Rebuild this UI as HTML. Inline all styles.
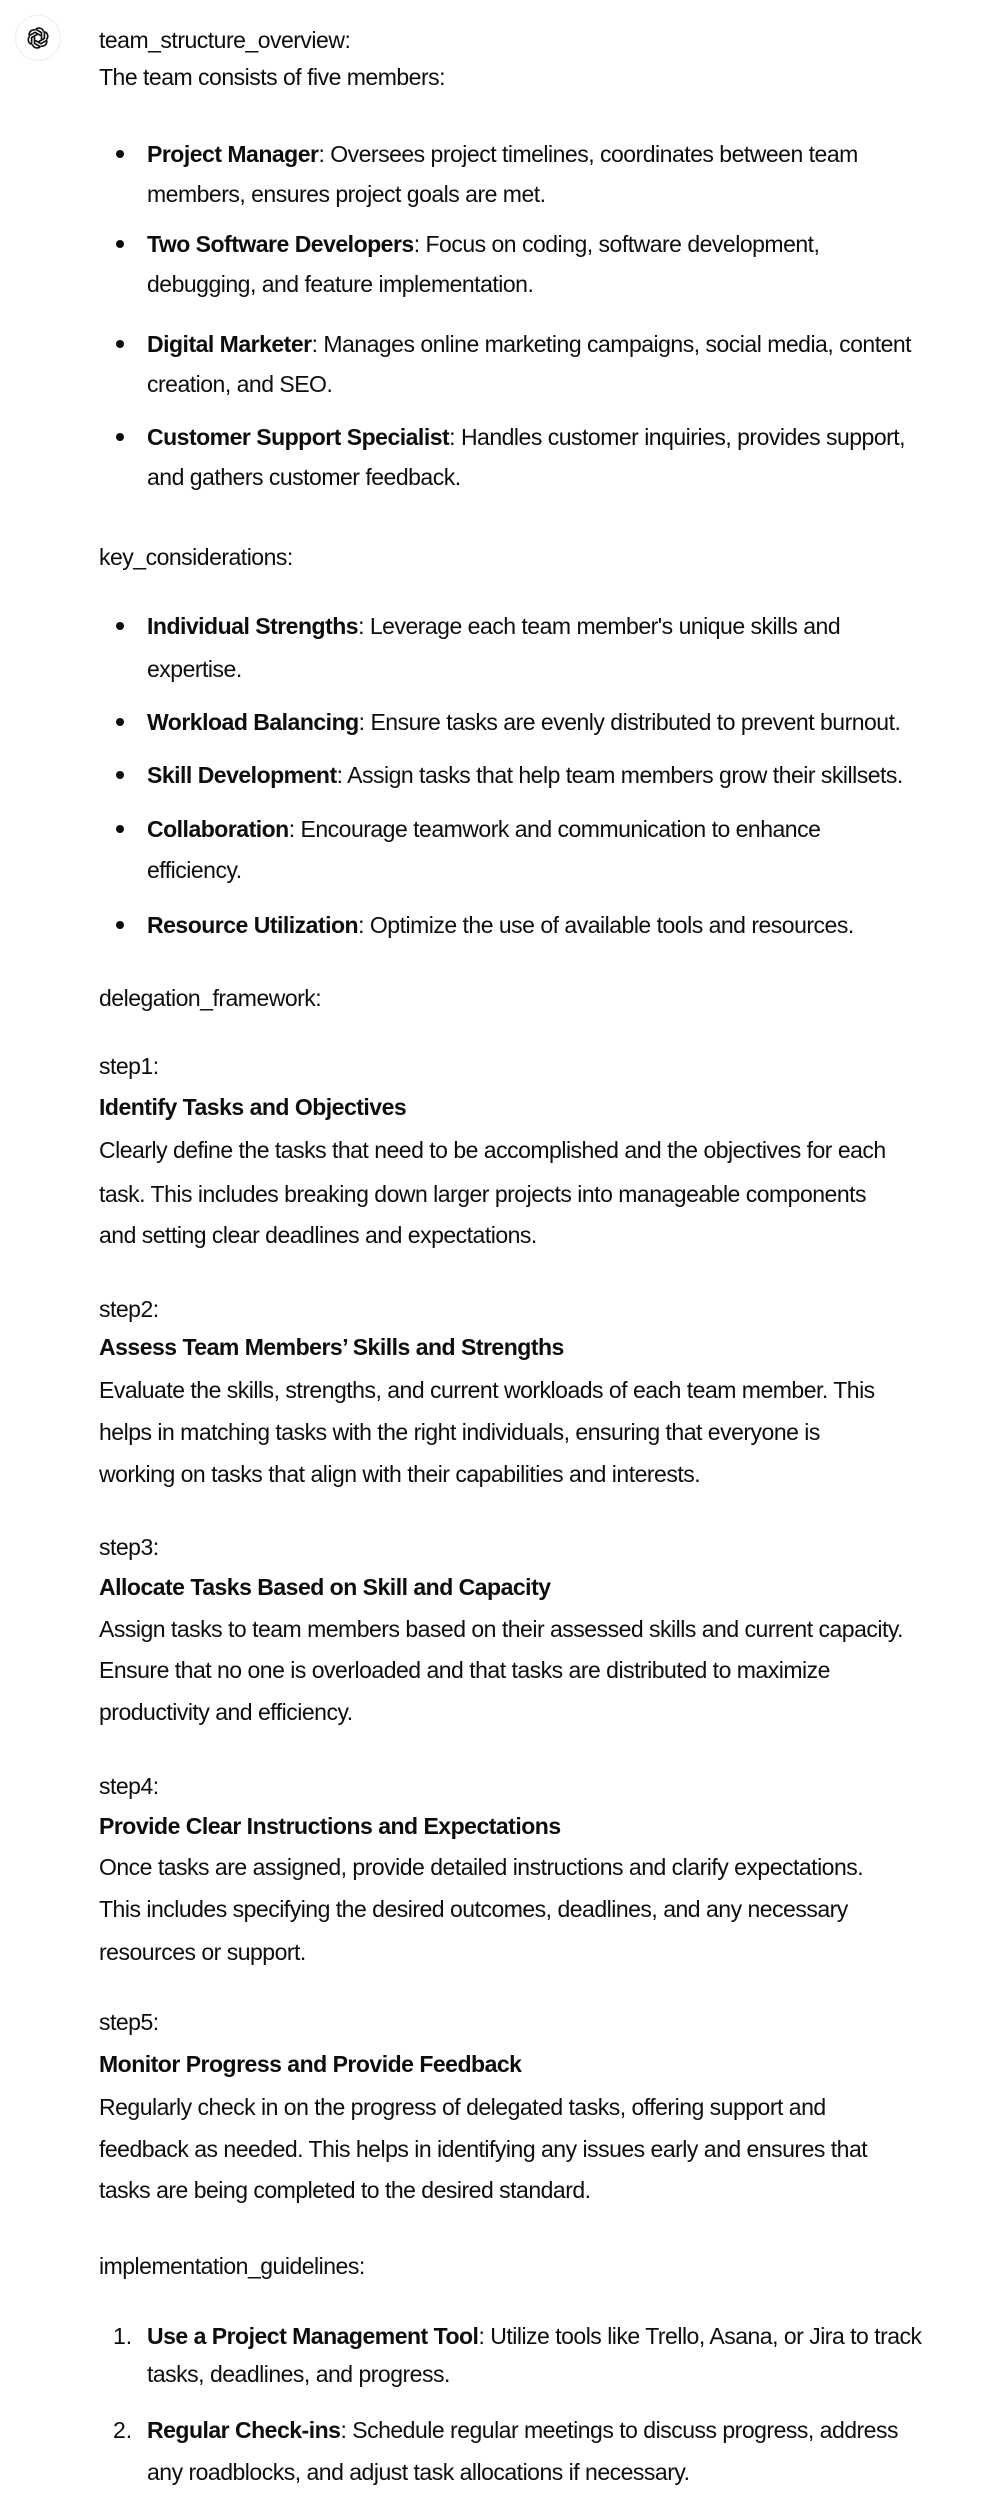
<!DOCTYPE html>
<html><head><meta charset="utf-8"><style>
body{margin:0;background:#fff;width:1000px;height:2500px;position:relative;overflow:hidden;font-family:"Liberation Sans",sans-serif;color:#0d0d0d}
.l{position:absolute;left:99px;height:40px;line-height:40px;font-size:23px;letter-spacing:-0.5px;white-space:nowrap}
.i{left:147px}
.b{position:absolute;left:116px;width:8px;height:8px;border-radius:50%;background:#0d0d0d}
.n{position:absolute;left:113px;height:40px;line-height:40px;font-size:23px}
b{font-weight:bold}
</style></head><body>
<div style="position:absolute;left:15px;top:15px;width:46px;height:46px;border-radius:50%;border:1px solid #eee;box-sizing:border-box"></div>
<svg style="position:absolute;left:24px;top:24px" width="28" height="28" viewBox="0 0 24 24" fill="none" stroke="#0d0d0d" stroke-width="1.4"><g transform="translate(12 12)"><g id="p"><path d="M-2 -7.5 L3 -4.6 L3 1.2 M-2 -7.5 A4.2 4.2 0 0 1 4.8 -5.5"/></g><use href="#p" transform="rotate(60)"/><use href="#p" transform="rotate(120)"/><use href="#p" transform="rotate(180)"/><use href="#p" transform="rotate(240)"/><use href="#p" transform="rotate(300)"/></g></svg>
<div class="l" style="top:20px">team_structure_overview:</div>
<div class="l" style="top:57px">The team consists of five members:</div>

<div class="b" style="top:150px"></div>
<div class="l i" style="top:134px"><b>Project Manager</b>: Oversees project timelines, coordinates between team</div>
<div class="l i" style="top:174px">members, ensures project goals are met.</div>
<div class="b" style="top:240px"></div>
<div class="l i" style="top:224px"><b>Two Software Developers</b>: Focus on coding, software development,</div>
<div class="l i" style="top:264px">debugging, and feature implementation.</div>
<div class="b" style="top:340px"></div>
<div class="l i" style="top:324px"><b>Digital Marketer</b>: Manages online marketing campaigns, social media, content</div>
<div class="l i" style="top:364px">creation, and SEO.</div>
<div class="b" style="top:433px"></div>
<div class="l i" style="top:417px"><b>Customer Support Specialist</b>: Handles customer inquiries, provides support,</div>
<div class="l i" style="top:457px">and gathers customer feedback.</div>

<div class="l" style="top:537px">key_considerations:</div>
<div class="b" style="top:622px"></div>
<div class="l i" style="top:606px"><b>Individual Strengths</b>: Leverage each team member's unique skills and</div>
<div class="l i" style="top:649px">expertise.</div>
<div class="b" style="top:718px"></div>
<div class="l i" style="top:702px"><b>Workload Balancing</b>: Ensure tasks are evenly distributed to prevent burnout.</div>
<div class="b" style="top:771px"></div>
<div class="l i" style="top:755px"><b>Skill Development</b>: Assign tasks that help team members grow their skillsets.</div>
<div class="b" style="top:825px"></div>
<div class="l i" style="top:809px"><b>Collaboration</b>: Encourage teamwork and communication to enhance</div>
<div class="l i" style="top:850px">efficiency.</div>
<div class="b" style="top:921px"></div>
<div class="l i" style="top:905px"><b>Resource Utilization</b>: Optimize the use of available tools and resources.</div>

<div class="l" style="top:978px">delegation_framework:</div>

<div class="l" style="top:1046px">step1:</div>
<div class="l" style="top:1087px"><b>Identify Tasks and Objectives</b></div>
<div class="l" style="top:1130px">Clearly define the tasks that need to be accomplished and the objectives for each</div>
<div class="l" style="top:1174px">task. This includes breaking down larger projects into manageable components</div>
<div class="l" style="top:1215px">and setting clear deadlines and expectations.</div>

<div class="l" style="top:1289px">step2:</div>
<div class="l" style="top:1327px"><b>Assess Team Members’ Skills and Strengths</b></div>
<div class="l" style="top:1370px">Evaluate the skills, strengths, and current workloads of each team member. This</div>
<div class="l" style="top:1412px">helps in matching tasks with the right individuals, ensuring that everyone is</div>
<div class="l" style="top:1454px">working on tasks that align with their capabilities and interests.</div>

<div class="l" style="top:1527px">step3:</div>
<div class="l" style="top:1567px"><b>Allocate Tasks Based on Skill and Capacity</b></div>
<div class="l" style="top:1609px">Assign tasks to team members based on their assessed skills and current capacity.</div>
<div class="l" style="top:1650px">Ensure that no one is overloaded and that tasks are distributed to maximize</div>
<div class="l" style="top:1692px">productivity and efficiency.</div>

<div class="l" style="top:1766px">step4:</div>
<div class="l" style="top:1806px"><b>Provide Clear Instructions and Expectations</b></div>
<div class="l" style="top:1847px">Once tasks are assigned, provide detailed instructions and clarify expectations.</div>
<div class="l" style="top:1889px">This includes specifying the desired outcomes, deadlines, and any necessary</div>
<div class="l" style="top:1932px">resources or support.</div>

<div class="l" style="top:2002px">step5:</div>
<div class="l" style="top:2044px"><b>Monitor Progress and Provide Feedback</b></div>
<div class="l" style="top:2087px">Regularly check in on the progress of delegated tasks, offering support and</div>
<div class="l" style="top:2129px">feedback as needed. This helps in identifying any issues early and ensures that</div>
<div class="l" style="top:2170px">tasks are being completed to the desired standard.</div>

<div class="l" style="top:2246px">implementation_guidelines:</div>
<div class="n" style="top:2316px">1.</div>
<div class="l i" style="top:2316px"><b>Use a Project Management Tool</b>: Utilize tools like Trello, Asana, or Jira to track</div>
<div class="l i" style="top:2354px">tasks, deadlines, and progress.</div>
<div class="n" style="top:2410px">2.</div>
<div class="l i" style="top:2410px"><b>Regular Check-ins</b>: Schedule regular meetings to discuss progress, address</div>
<div class="l i" style="top:2452px">any roadblocks, and adjust task allocations if necessary.</div>
</body></html>
